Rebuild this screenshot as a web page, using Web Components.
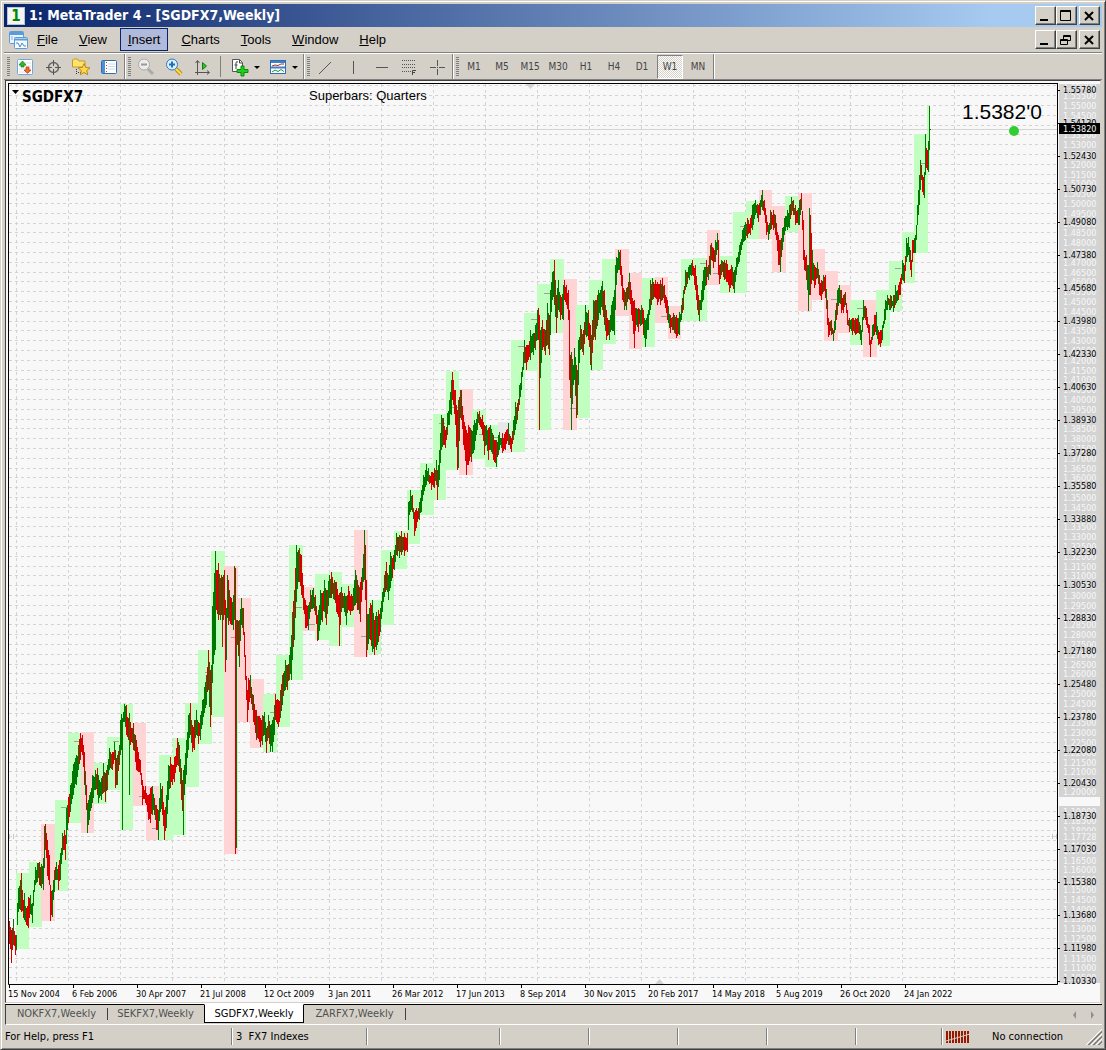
<!DOCTYPE html>
<html lang="en">
<head>
<meta charset="utf-8">
<title>1: MetaTrader 4 - [SGDFX7,Weekly]</title>
<style>
  html, body {
    margin: 0;
    background: #d4d0c8;
  }
  body {
    --face: #d4d0c8;
    --ui: "DejaVu Sans Condensed", "Noto Sans", sans-serif;
    --arial: "Liberation Sans", Arial, sans-serif;
    font-family: var(--ui);
    font-size: 11px;
    color: #000;
  }
</style>
</head>
<body>
<mt-window>
  <mt-titlebar>1: MetaTrader 4 - [SGDFX7,Weekly]</mt-titlebar>
  <mt-menubar items="File,View,Insert,Charts,Tools,Window,Help" active="Insert"></mt-menubar>
  <mt-toolbar></mt-toolbar>
  <mt-chart></mt-chart>
  <mt-tabs items="NOKFX7,SEKFX7,SGDFX7,ZARFX7" active="SGDFX7"></mt-tabs>
  <mt-status>
    <span slot="help">For Help, press F1</span>
    <span slot="profile">3&nbsp; FX7 Indexes</span>
    <span slot="connection">No connection</span>
  </mt-status>
</mt-window>

<script>
class MtElement extends HTMLElement {
  constructor() {
    super();
    this.attachShadow({mode: 'open'});
  }

  connectedCallback() {
    const template = document.createElement('template');
    template.innerHTML = this.markup();
    this.shadowRoot.replaceChildren(template.content);
  }

  list(name) {
    return (this.getAttribute(name) || '').split(',');
  }
}

class MtWindow extends MtElement {
  markup() {
    return `
      <style>
        :host {
          display: flex;
          flex-direction: column;
          box-sizing: border-box;
          min-height: 100vh;
          padding: 3px;
          padding-bottom: 1px;
          background: var(--face);
          border: 1px solid;
          border-color: #d4d0c8 #404040 #404040 #d4d0c8;
          box-shadow: inset 1px 1px #fff, inset -1px -1px #808080;
        }
      </style>
      <slot></slot>`;
  }
}

// minimize / maximize or restore / close
class MtWinButtons extends MtElement {
  markup() {
    const middle = this.hasAttribute('restore')
      ? '<path d="M6.5 7V3.5h7v5H11M6 4.5h8M3.5 7.5h7v5h-7zM3 8.5h8"/>'
      : '<path d="M3.5 2.5h10v10h-10zM3 3.5h11"/>';
    return `
      <style>
        :host { display: flex; }
        button {
          width: 21px;
          height: 19px;
          padding: 0;
          background: var(--face);
          border: 1px solid;
          border-color: #fff #404040 #404040 #fff;
          box-shadow: inset -1px -1px #808080;
        }
        .close { margin-left: 2px; }
        svg { display: block; fill: none; stroke: #000; }
      </style>
      <button aria-label="Minimize"><svg width="18" height="16"><path d="M4 12h8" stroke-width="2"/></svg></button>
      <button aria-label="Resize"><svg width="18" height="16">${middle}</svg></button>
      <button class="close" aria-label="Close"><svg width="18" height="16"><path d="M5 4l8 8M13 4l-8 8" stroke-width="2"/></svg></button>`;
  }
}

class MtTitlebar extends MtElement {
  markup() {
    return `
      <style>
        :host {
          display: flex;
          align-items: center;
          height: 23px;
          padding: 0 2px 0 3px;
          background: linear-gradient(90deg, #0a246a, #a6caf0 90%);
          color: #fff;
          font: bold 14px/23px var(--ui);
        }
        .logo {
          width: 16px;
          height: 16px;
          border: 1px solid #b8c4d4;
          background: #f4f6f4;
          color: #080;
          font: bold 15px/16px var(--ui);
          text-align: center;
        }
        .caption { flex: 1; padding-left: 4px; white-space: nowrap; }
      </style>
      <span class="logo">1</span>
      <span class="caption"><slot></slot></span>
      <mt-win-buttons></mt-win-buttons>`;
  }
}

class MtMenubar extends MtElement {
  markup() {
    const active = this.getAttribute('active');
    const items = this.list('items').map(name =>
      `<button class="item${name === active ? ' active' : ''}"><u>${name[0]}</u>${name.slice(1)}</button>`
    ).join('');
    return `
      <style>
        :host {
          display: flex;
          align-items: center;
          height: 25px;
          padding: 0 2px 0 4px;
          border-bottom: 1px solid #808080;
          box-shadow: 0 1px #fff;
        }
        nav { display: flex; flex: 1; gap: 5px; }
        .item {
          height: 23px;
          padding: 0 7px;
          border: 1px solid transparent;
          background: none;
          font: 13px/21px var(--arial);
        }
        .active { background: #b0bada; border-color: #0a246a; }
      </style>
      <svg width="21" height="20" fill="none">
        <rect x="1.5" y="1.5" width="14" height="12" rx="1" fill="#eaf5ff" stroke="#5b9bd8"/>
        <path d="M2 3.5h13" stroke="#5b9bd8" stroke-width="3"/>
        <path d="M4 10V6M7 11V7M9 8h2" stroke="#80b0dd"/>
        <rect x="6.500" y="7.500" width="13" height="11" rx="1" fill="#f6fbff" stroke="#5b9bd8"/>
        <path d="M7 9.500h12" stroke="#5b9bd8" stroke-width="2"/>
        <path d="M8 13h2l2 4 2-4 2 3h2" stroke="#4a88c8"/>
      </svg>
      <nav>${items}</nav>
      <mt-win-buttons restore></mt-win-buttons>`;
  }
}

const ICONS = {
  market: `<rect x="2.500" y="2.500" width="15" height="15" rx="1" fill="#fff" stroke="#6ea8dc"/>
    <path d="M4 6h12M4 9h12M4 12h12M4 15h12" stroke="#ddd"/>
    <path d="M4 8l3.500-4L11 8H9v2H6V8z" fill="#2eb82e" stroke="#148014" stroke-width=".7"/>
    <path d="M9 13l3.500 3.500L16 13h-2v-3h-3v3z" fill="#ef6a35" stroke="#c03c10" stroke-width=".7"/>`,
  target: `<circle cx="10.500" cy="10.500" r="5" stroke="#666" stroke-width="1.500"/>
    <path d="M10.500 3v6M10.500 12v6M3 10.500h6M12 10.500h6" stroke="#555"/>`,
  folder: `<path d="M1.500 10V3l1-1h4l1.500 2h6v6z" fill="#ffe36e" stroke="#c49a20"/>
    <path d="M5.500 12v6M7 15.500h3" stroke="#333" stroke-dasharray="1 1"/>
    <path d="M13 6.500l1.700 4 4.300.3-3.300 2.800 1.100 4.200-3.800-2.300-3.700 2.300 1.100-4.200L7 10.800l4.300-.3z" fill="#ffd84a" stroke="#b88a14"/>`,
  terminal: `<rect x="2.500" y="3.500" width="15" height="13" rx="1" fill="#fff" stroke="#2f6fb0"/>
    <path d="M3 4h3v12H3z" fill="#4a90d8"/><path d="M9 7h7M9 9.500h7M9 12h7" stroke="#ccd8e8"/>
    <path d="M7.500 5v11" stroke="#d33" stroke-dasharray="1 2"/>`,
  zoomout: `<path d="M12 12l5 5" stroke="#aaa" stroke-width="3"/>
    <circle cx="8" cy="7.500" r="5.500" fill="#ececec" stroke="#aaa"/><path d="M5 7.500h6" stroke="#999" stroke-width="2"/>`,
  zoomin: `<path d="M12 12l5 5" stroke="#b88a14" stroke-width="4"/><path d="M12 12l5 5" stroke="#ffe04a" stroke-width="2"/>
    <circle cx="8" cy="7.500" r="5.500" fill="#d8f0ff" stroke="#2c78c0"/><path d="M5 7.500h6M8 4.500v6" stroke="#2070b0" stroke-width="2"/>`,
  scroll: `<path d="M5.500 4v14M3 15.500h14M3.500 6l2-2.500 2 2.500M15 13.500l2.500 2-2.500 2" stroke="#555"/>
    <path d="M10.500 5.500v7l4-3.500z" fill="#2bc42b" stroke="#128012"/>`,
  add: `<path d="M2.500 2.500h7l3 3v9h-10z" fill="#fff" stroke="#555"/><path d="M9.500 3v3h3M8 5q-2-1-2 1v6M4.500 8h3" stroke="#444"/>
    <path d="M11 9h3v3.500h4v3h-4V19h-3v-3.500H7v-3h4z" fill="#1fd01f" stroke="#0a8a0a"/>`,
  indicator: `<rect x="2.500" y="3.500" width="15" height="13" fill="#fff" stroke="#2f6fb0"/><path d="M3 5h14M3 10.500h14" stroke="#3c82c8" stroke-width="2"/>
    <path d="M4 9l3-1 3 .5 3-1.500h3" stroke="#a33020"/><path d="M4 15l3-2 3 1.500 3-2 3 2" stroke="#209040"/>`,
  line: '<path d="M4 17L16 5" stroke="#555"/>',
  vline: '<path d="M10.500 4v13" stroke="#555"/>',
  hline: '<path d="M5 10.500h12" stroke="#555"/>',
  fibo: '<path d="M3 3.500h14M3 7.500h14M3 10.500h14M3 14.500h9" stroke="#555" stroke-dasharray="1 1"/><path d="M13.500 18v-4.500H17M13.500 15.500H16" stroke="#444"/>',
  cross: '<path d="M10.500 3v6M10.500 10v1M10.500 12v6M3 10.500h6M12 10.500h6" stroke="#555"/>'
};

class MtTool extends MtElement {
  markup() {
    const icon = this.getAttribute('icon');
    const arrow = this.hasAttribute('menu')
      ? '<button class="arrow" aria-label="More"><svg width="6" height="8"><path d="M0 3h6L3 6z"/></svg></button>' : '';
    const face = icon
      ? `<svg width="20" height="20" viewBox="0 0 20 20" fill="none">${ICONS[icon]}</svg>`
      : '<slot></slot>';
    return `
      <style>
        :host { display: flex; align-items: center; }
        button {
          display: flex;
          align-items: center;
          justify-content: center;
          box-sizing: border-box;
          width: 28px;
          height: 24px;
          padding: 0;
          border: 0;
          background: none;
          color: #444;
          font: 10px/20px var(--ui);
        }
        .arrow { width: 10px; justify-content: flex-start; }
        :host([on]) button {
          width: 26px;
          margin: 0 1px;
          border: 1px solid;
          border-color: #808080 #fff #fff #808080;
          background: repeating-conic-gradient(#fff 0 25%, #d4d0c8 0 50%) 0 0 / 2px 2px;
        }
      </style>
      <button aria-label="${icon || this.textContent}">${face}</button>${arrow}`;
  }
}

class MtToolGroup extends MtElement {
  markup() {
    return `
      <style>
        :host {
          display: flex;
          align-items: center;
          height: 25px;
          padding: 0 1px 0 3px;
          border-right: 1px solid #808080;
          box-shadow: 1px 0 #fff;
        }
        .grip {
          width: 3px;
          height: 19px;
          margin-right: 1px;
          background: repeating-linear-gradient(#808080 0 1px, transparent 1px 2px);
        }
        ::slotted(hr) {
          width: 1px;
          height: 21px;
          margin: 0 5px 0 4px;
          border: 0;
          background: #808080;
        }
      </style>
      <span class="grip"></span><slot></slot>`;
  }
}

class MtToolbar extends MtElement {
  markup() {
    const tools = names => names.map(n => `<mt-tool icon="${n}"></mt-tool>`).join('');
    const periods = ['M1', 'M5', 'M15', 'M30', 'H1', 'H4', 'D1', 'W1', 'MN']
      .map(p => `<mt-tool${p === 'W1' ? ' on' : ''}>${p}</mt-tool>`).join('');
    return `
      <style>
        :host {
          display: flex;
          height: 25px;
          padding-top: 1px;
          border-bottom: 1px solid #808080;
        }
      </style>
      <mt-tool-group>${tools(['market', 'target', 'folder', 'terminal'])}</mt-tool-group>
      <mt-tool-group>${tools(['zoomout', 'zoomin', 'scroll'])}<hr><mt-tool icon="add" menu></mt-tool><mt-tool icon="indicator" menu></mt-tool></mt-tool-group>
      <mt-tool-group>${tools(['line', 'vline', 'hline', 'fibo', 'cross'])}</mt-tool-group>
      <mt-tool-group>${periods}</mt-tool-group>`;
  }
}

// quarters: left, right, top, bottom, direction
const QUARTERS = `16 29 873 949 g;29 42 862 927 g;41 55 824 921 r;55 68 800 891 g;68 81 733 823 g;81 94 732 833 r;
94 107 763 804 g;107 120 737 790 g;120 133 704 830 g;133 146 723 806 r;146 159 786 840 r;159 173 755 840 g;
173 186 738 835 g;185 199 703 787 g;198 212 650 744 g;211 225 551 717 g;224 238 566 854 r;238 251 598 722 r;
250 264 679 748 r;263 277 694 752 g;276 290 655 727 g;289 303 545 680 g;303 316 587 631 r;315 329 574 640 g;
329 342 572 646 g;342 355 584 627 g;354 368 530 657 r;368 381 600 654 g;381 394 550 625 g;394 407 531 569 g;
407 420 490 544 g;420 434 463 515 g;433 446 414 500 g;446 459 371 470 g;459 473 389 475 r;472 486 410 459 g;
485 498 425 467 g;498 511 422 453 n;511 525 340 452 g;524 537 313 371 g;537 551 284 430 g;550 564 259 333 g;
563 577 279 430 r;576 590 305 418 g;589 603 280 370 g;602 616 259 344 g;615 629 249 316 r;629 642 273 349 r;
642 655 278 347 g;655 668 277 323 r;668 681 306 339 r;681 694 259 321 g;694 707 258 321 g;707 720 230 285 r;
720 733 256 293 g;733 747 212 293 g;746 759 201 239 g;759 772 190 239 r;772 786 206 272 r;785 798 196 232 g;
798 812 193 311 r;812 825 249 300 r;824 838 271 341 r;838 851 285 333 r;850 864 300 345 g;863 877 300 357 r;
876 890 290 346 g;889 902 261 311 g;902 915 232 283 g;914 928 134 253 g;927 930 106 172 g`;

// bar ranges: x, high, low, direction (m = mixed)
const RANGES = `9 921 944 r;11 930 963 r;13 919 945 g;15 935 955 r;16 935 950 g;17 903 925 g;18 888 912 g;20 880 910 g;21 873 912 r;
23 900 918 r;24 893 920 g;26 908 925 r;28 897 928 r;30 895 914 g;32 903 923 g;33 890 906 g;35 867 885 g;37 863 882 g;39 862 885 r;
41 864 888 g;43 858 890 g;44 826 868 g;45 824 850 r;47 840 876 r;49 855 885 r;50 885 921 r;52 890 917 g;54 870 892 g;56 862 880 g;
58 865 890 r;60 853 880 g;62 833 855 g;64 830 850 r;65 835 860 r;66 808 844 g;68 797 823 r;70 785 812 g;73 764 795 g;76 755 785 m;
78 745 770 g;80 733 760 m;82 735 755 r;84 752 785 r;86 785 810 r;87 803 833 g;89 795 820 g;92 775 803 g;95 770 790 m;97 768 795 r;
98 775 803 g;101 778 800 g;103 763 793 g;105 773 802 r;107 765 790 g;109 748 770 g;112 752 770 r;114 742 760 g;115 750 788 r;
117 755 785 g;119 745 765 g;120 720 755 g;121 714 750 g;122 718 830 g;123 712 722 g;124 704 722 g;126 705 735 r;128 718 740 r;
129 713 795 g;130 722 745 r;133 723 750 r;136 740 770 r;138 752 772 m;140 760 775 r;142 780 805 r;145 786 803 m;148 795 820 r;
150 788 823 r;152 786 815 g;154 798 815 r;156 805 830 r;158 810 840 g;160 783 812 g;162 786 815 r;164 810 840 r;166 795 828 g;
168 765 800 g;170 757 788 r;172 765 785 m;174 757 782 r;177 738 765 m;179 745 772 r;181 768 800 r;182 780 811 r;183 770 835 g;
184 765 795 g;186 740 775 g;188 715 750 g;190 703 735 r;192 725 752 r;194 720 750 m;196 710 735 g;198 722 744 r;200 715 740 g;
202 700 725 g;204 687 713 g;206 675 705 g;208 650 690 r;210 670 727 r;211 665 715 g;212 606 683 g;214 573 655 g;215 551 650 g;
216 570 610 m;218 563 620 r;220 578 620 m;221 575 615 r;222 577 647 r;223 575 620 g;224 570 615 r;225 600 672 r;226 608 660 g;
227 575 618 g;228 580 625 r;231 598 625 m;233 595 630 g;234 566 620 g;235 568 854 r;236 620 848 g;237 620 645 r;239 620 667 g;
241 598 625 g;243 608 635 r;245 655 680 r;247 690 722 r;248 678 710 r;250 675 698 m;253 695 722 r;256 710 740 r;260 718 747 r;
262 715 745 g;264 712 735 g;266 728 753 r;268 715 738 m;270 725 752 g;272 720 752 g;274 705 735 g;275 694 720 r;278 700 727 r;
280 690 718 g;282 675 705 g;285 660 690 g;287 665 690 r;289 655 680 g;291 635 680 g;292 612 660 g;294 590 640 g;296 545 602 g;
298 550 582 r;299 548 582 g;301 555 595 r;303 585 610 r;305 600 628 r;308 605 630 g;310 590 612 g;313 588 608 g;315 595 615 m;
317 615 641 r;318 610 640 g;320 590 625 g;322 593 622 r;324 580 612 m;326 590 625 r;329 575 598 g;331 572 598 r;334 580 600 m;
336 582 612 r;338 595 617 r;339 593 646 r;341 587 612 g;344 593 612 m;346 596 625 g;348 586 610 m;350 596 615 r;353 588 610 m;
355 570 605 g;357 580 610 r;360 582 622 r;362 568 590 g;364 530 580 g;365 545 600 r;366 580 657 r;367 614 650 g;370 603 640 m;
372 600 652 g;374 620 655 r;376 612 650 g;378 610 642 r;380 608 632 g;382 592 612 g;384 575 597 g;386 562 590 m;388 575 600 g;
390 552 588 g;392 558 578 r;394 550 570 g;396 533 555 m;399 535 558 g;401 531 555 m;404 533 556 r;407 533 552 r;408 502 530 g;
410 490 512 g;412 495 512 r;414 512 536 r;416 508 528 m;419 502 520 g;421 490 512 g;423 475 495 g;426 464 485 g;428 468 482 m;
431 472 490 r;434 468 488 r;436 460 485 g;437 470 500 r;439 450 480 g;441 415 450 g;443 418 445 r;445 430 448 r;447 413 435 g;
449 400 425 g;451 380 415 g;452 372 400 r;453 380 405 r;455 390 425 r;457 410 470 r;458 400 468 g;460 390 418 g;461 390 420 r;
463 415 445 r;466 430 475 r;468 425 465 m;471 430 462 m;474 420 450 g;477 412 430 g;479 411 425 m;482 415 435 r;484 425 455 r;
486 425 445 g;488 428 460 r;490 425 450 g;493 435 460 r;496 440 467 g;499 432 450 g;502 433 453 r;505 432 450 m;508 423 445 m;
511 438 452 r;513 420 440 g;515 402 430 g;517 403 420 r;519 385 405 g;521 372 390 g;524 340 363 g;526 345 370 r;528 345 360 m;
530 330 360 g;533 333 355 m;535 325 350 g;537 310 340 g;538 308 340 r;539 315 430 r;540 330 378 g;542 320 350 m;545 330 355 r;
547 303 345 g;549 315 355 r;550 290 335 g;552 272 300 g;554 260 305 r;556 295 333 r;558 280 310 g;560 295 320 r;563 285 320 g;
564 280 300 r;566 285 305 r;568 290 320 r;569 310 380 r;570 355 398 r;571 352 430 g;573 365 385 m;574 348 380 g;576 365 418 r;
577 370 415 g;578 340 385 g;580 325 350 g;583 330 355 r;585 305 335 g;588 310 340 m;590 325 365 r;591 335 370 g;593 300 340 g;
595 300 340 r;598 290 320 g;600 290 315 m;602 281 310 m;604 290 325 r;606 310 340 r;609 320 340 g;611 305 330 g;614 290 335 g;
615 265 310 g;616 257 285 g;618 250 270 g;620 250 275 r;622 275 300 r;624 290 310 m;626 288 310 m;629 273 300 m;631 290 315 r;
634 300 348 r;636 308 325 m;638 308 332 m;641 305 325 g;643 310 335 r;645 320 347 g;648 310 330 g;650 280 310 g;652 278 300 m;
655 280 298 r;657 282 305 r;660 280 305 m;662 278 300 m;664 285 303 r;667 300 320 r;670 315 333 r;673 313 330 m;676 315 338 m;
679 312 335 g;681 305 320 g;683 290 310 g;685 270 290 g;689 265 280 g;692 260 275 m;695 265 290 r;697 285 310 r;699 300 321 g;
701 290 310 g;703 270 300 g;706 260 285 m;708 265 280 g;710 245 275 g;711 243 260 r;713 248 268 r;715 240 262 g;717 233 250 g;
718 240 275 r;719 265 284 r;721 260 275 g;724 260 280 m;726 260 282 r;729 270 292 r;731 265 285 m;734 270 293 g;736 258 275 g;
739 245 262 g;742 230 245 g;745 222 240 g;747 218 238 r;750 218 235 m;752 205 230 g;755 200 215 m;758 205 222 r;760 200 215 g;
762 190 210 g;764 200 215 r;766 215 235 r;768 225 240 g;770 210 230 g;773 210 230 m;775 215 235 r;778 235 265 r;780 240 272 g;
782 228 250 g;784 218 235 g;787 210 230 g;789 205 228 g;791 197 215 g;793 200 215 m;795 205 225 r;798 208 225 g;799 200 225 g;
801 193 210 r;803 220 260 r;804 250 270 r;806 255 280 r;808 265 311 g;809 208 295 g;810 215 295 r;812 250 280 g;814 265 288 r;
817 262 278 m;819 275 295 r;821 280 300 m;823 275 292 g;825 275 298 r;827 300 325 r;828 318 337 r;831 320 335 r;833 330 341 g;
835 310 330 g;837 290 315 g;839 285 303 g;841 290 313 r;843 295 313 m;845 292 305 r;847 310 325 r;849 318 332 m;852 318 335 m;
855 318 335 r;858 315 333 m;860 325 340 g;861 330 345 g;863 300 320 g;866 308 325 r;869 325 345 r;870 340 357 r;872 325 340 g;
874 315 335 m;876 312 335 m;878 330 345 r;880 330 347 r;882 325 340 g;885 300 320 g;887 295 310 g;890 295 310 m;893 295 312 m;
895 285 305 g;898 285 300 r;900 278 295 m;902 260 280 m;904 265 283 r;906 238 262 g;908 237 255 m;910 250 270 r;911 260 277 r;
912 240 262 r;913 240 253 r;914 238 253 g;915 235 253 g;916 225 240 g;917 205 225 g;918 190 215 g;919 175 205 g;920 160 190 g;
921 165 180 r;922 175 192 r;924 172 198 g;925 134 175 g;926 148 168 r;927 150 170 r;928 141 172 g;929 106 150 g`;

const MARKS = `61 807;74 741;113 741;139 796;152 828;205 672;231 637;270 712;296 607;309 624;361 636;439 423;452 407;479 434;
494 437;518 346;531 319;544 293;570 408;661 316;700 263;713 273;740 226;831 299;857 308;895 268;921 163`;

const TIMES = ['15 Nov 2004', '6 Feb 2006', '30 Apr 2007', '21 Jul 2008', '12 Oct 2009', '3 Jan 2011', '26 Mar 2012',
  '17 Jun 2013', '8 Sep 2014', '30 Nov 2015', '20 Feb 2017', '14 May 2018', '5 Aug 2019', '26 Oct 2020', '24 Jan 2022'];

const PRICES = ['1.55780', '1.54130', '1.52430', '1.50730', '1.49080', '1.47380', '1.45680', '1.43980', '1.42330', '1.40630',
  '1.38930', '1.37280', '1.35580', '1.33880', '1.32230', '1.30530', '1.28830', '1.27180', '1.25480', '1.23780', '1.22080',
  '1.20430', '1.18730', '1.17030', '1.15380', '1.13680', '1.11980', '1.10330'];

const rows = text => text.split(';').map(row => row.trim().split(' ').map(v => isNaN(v) ? v : Number(v)));
const priceY = price => Math.round(105 + (1.55 - price) * 1960);

class MtChart extends MtElement {
  levels() {
    const levels = [];
    for (let i = 0; i <= 91; i++) {
      // 1.195 has no line
      if (i !== 73) levels.push(1.56 - i * 0.005);
    }
    levels.push(1.17728);
    return levels;
  }

  grid() {
    let d = '';
    for (const level of this.levels()) d += `M9 ${priceY(level)}.5H1057`;
    for (let i = 0; i < 19; i++) d += `M${Math.round(16 + i * 52.1)}.5 84V984`;
    return `<path d="${d}" stroke="#d3d3d3" stroke-dasharray="3 3"/>`;
  }

  quarters() {
    const fill = {g: '#c0ffc0', r: '#ffd4d4', n: '#e8e8e8'};
    return rows(QUARTERS).map(([x0, x1, y0, y1, c]) =>
      `<rect x="${x0}" y="${y0}" width="${x1 - x0}" height="${y1 - y0}" fill="${fill[c]}"/>`).join('');
  }

  bars() {
    const points = rows(RANGES);
    const d = {g: '', r: ''};
    let seed = 7;
    const random = () => (seed = (seed * 16807) % 2147483647) / 2147483647;
    points.forEach(([x, top, bottom, dir], i) => {
      const next = points[i + 1] || [x + 1, top, bottom];
      for (let bx = x; bx < next[0]; bx++) {
        const t = (bx - x) / (next[0] - x);
        const jitter = t ? 6 : 0;
        const high = Math.round(top + (next[1] - top) * t + random() * jitter);
        const low = Math.round(bottom + (next[2] - bottom) * t - random() * jitter);
        const mixed = dir === 'm' ? 0.5 : t ? 0.2 : 0;
        let c = dir === 'm' ? 'g' : dir;
        if (random() < mixed) c = c === 'g' ? 'r' : 'g';
        d[c] += `M${bx}.5 ${high}V${Math.max(low, high + 5)}`;
      }
    });
    return `<path d="${d.r}" stroke="#d60000"/><path d="${d.g}" stroke="#007800"/>`;
  }

  markup() {
    const marks = rows(MARKS).map(([x, y]) => `M${x} ${y}.5h6`).join('');
    const scale = this.levels().map(level => {
      const y = priceY(level);
      return `<rect x="1059" y="${Math.max(84, y - 5)}" width="41" height="11" fill="#d3d3d3"/>
        <text class="level" x="1063" y="${y + 4}">${level.toFixed(5)}</text>`;
    }).join('');
    const prices = PRICES.map((p, i) => `<text x="1063" y="${93 + i * 33}">${p}</text>`).join('');
    const times = TIMES.map((t, i) => `<text x="${8 + i * 64}" y="997">${t}</text>`).join('');
    const ticks = PRICES.map((p, i) => `M1058 ${90 + i * 33}.5h2`).join('') +
      TIMES.map((t, i) => `M${9 + i * 64}.5 985v3`).join('');
    return `
      <style>
        :host {
          display: block;
          border: 1px solid;
          border-color: #404040 #d4d0c8 #d4d0c8 #404040;
          margin: 0 1px;
          background: #f8f8f8;
          box-shadow: 0 1px #fff;
          margin-bottom: 1px;
        }
        svg { display: block; width: 100%; height: auto; fill: none; }
        text { fill: #000; font: 9px var(--ui); }
        .level, .current { fill: #f8f8f8; }
        .symbol { font: bold 15px var(--ui); }
        .note { font: 13px var(--arial); }
        .price { font: 21px var(--arial); }
      </style>
      <svg viewBox="6 81 1094 921">
        ${this.grid()}
        ${this.quarters()}
        <path d="${marks}" stroke="#a0a0a0"/>
        <path d="M9 129.500H1057" stroke="#d3d3d3"/>
        ${this.bars()}
        <path d="M929 129.500h2" stroke="#007800"/>
        <path d="M526 84h9l-4.500 5zM655 984h9l-4.500-5z" fill="#d3d3d3"/>
        <path d="M9.500 834v5M13.500 834v5M1052.500 834v5M1056.500 834v5" stroke="#c8c8c8"/>
        ${scale}
        <path d="M8.500 83V984.500H1057.500V83M8 83.500H1058" stroke="#000"/>
        <path d="${ticks}" stroke="#000"/>
        ${prices}
        <rect x="1059" y="123" width="41" height="11" fill="#000"/>
        <text class="current" x="1063" y="132">1.53820</text>
        ${times}
        <path d="M12 90h7l-3.500 4z" fill="#000"/>
        <text class="symbol" x="22" y="102">SGDFX7</text>
        <text class="note" x="309" y="100">Superbars: Quarters</text>
        <text class="price" x="962" y="119">1.5382'0</text>
        <circle cx="1014" cy="131" r="5" fill="#32cd32"/>
      </svg>`;
  }
}

class MtTabs extends MtElement {
  markup() {
    const active = this.getAttribute('active');
    const tabs = this.list('items').map(name =>
      `<button class="tab${name === active ? ' active' : ''}">${name},Weekly</button>`).join('');
    return `
      <style>
        :host {
          display: flex;
          height: 18px;
          margin-left: 1px;
          padding: 0 2px 1px 0;
          border-left: 1px solid #404040;
          border-top: 1px solid #000;
          border-bottom: 1px solid #fff;
        }
        .tabs { display: flex; flex: 1; }
        .tab {
          position: relative;
          box-sizing: border-box;
          width: 99px;
          height: 18px;
          padding: 0 0 0 2px;
          border: 0;
          background: none;
          color: #505050;
          font: 11px/16px var(--ui);
        }
        .tab:not(.active)::after {
          content: "";
          position: absolute;
          right: -3px;
          top: 3px;
          height: 12px;
          border-right: 1px solid #404040;
        }
        .tab:has(+ .active)::after { display: none; }
        .active {
          margin-top: -1px;
          width: 100px;
          height: 19px;
          padding: 0;
          background: #fff;
          border: 1px solid #000;
          border-top-color: #fff;
          color: #000;
        }
        .scroll { width: 17px; padding: 0; border: 0; background: none; }
      </style>
      <div class="tabs">${tabs}</div>
      <button class="scroll" aria-label="Scroll left"><svg width="8" height="8"><path d="M5 0v8L2 4z" fill="#909090"/></svg></button>
      <button class="scroll" aria-label="Scroll right"><svg width="8" height="8"><path d="M3 0v8l3-4z" fill="#909090"/></svg></button>`;
  }
}

class MtStatus extends MtElement {
  markup() {
    return `
      <style>
        :host {
          display: flex;
          align-items: center;
          height: 23px;
          font: 11px/17px var(--ui);
          white-space: nowrap;
        }
        .cell {
          display: flex;
          align-items: center;
          box-sizing: border-box;
          width: 89px;
          height: 17px;
          padding-left: 4px;
          border-left: 1px solid #808080;
          box-shadow: inset 1px 0 #fff;
        }
        .help { flex: 1; padding-left: 1px; }
        .profile { width: 135px; }
        .news { width: 133px; }
        .volume { width: 86px; }
        .link { width: 161px; gap: 22px; }
        .size { margin-left: auto; }
      </style>
      <span class="help"><slot name="help"></slot></span>
      <span class="cell profile"><slot name="profile"></slot></span>
      <span class="cell news"></span>
      <span class="cell"></span>
      <span class="cell"></span>
      <span class="cell"></span>
      <span class="cell"></span>
      <span class="cell volume"></span>
      <span class="cell link">
        <svg width="24" height="12">
          <path d="M1 0v12M4 0v12M7 0v12M10 0v12M13 0v12M16 0v12M19 0v12M22 0v12" stroke="#981800" stroke-width="2"/>
          <path d="M0 10L24 3" stroke="#d4d0c8"/>
        </svg>
        <slot name="connection"></slot>
        <svg class="size" width="16" height="16">
          <path d="M0 16L16 0M5 16L16 5M10 16l6-6" stroke="#fff"/>
          <path d="M2 16L16 2M3 16L16 3M7 16l9-9M8 16l8-8M12 16l4-4M13 16l3-3" stroke="#808080"/>
        </svg>
      </span>`;
  }
}

customElements.define('mt-win-buttons', MtWinButtons);
customElements.define('mt-tool', MtTool);
customElements.define('mt-tool-group', MtToolGroup);
customElements.define('mt-titlebar', MtTitlebar);
customElements.define('mt-menubar', MtMenubar);
customElements.define('mt-toolbar', MtToolbar);
customElements.define('mt-chart', MtChart);
customElements.define('mt-tabs', MtTabs);
customElements.define('mt-status', MtStatus);
customElements.define('mt-window', MtWindow);
</script>
</body>
</html>
